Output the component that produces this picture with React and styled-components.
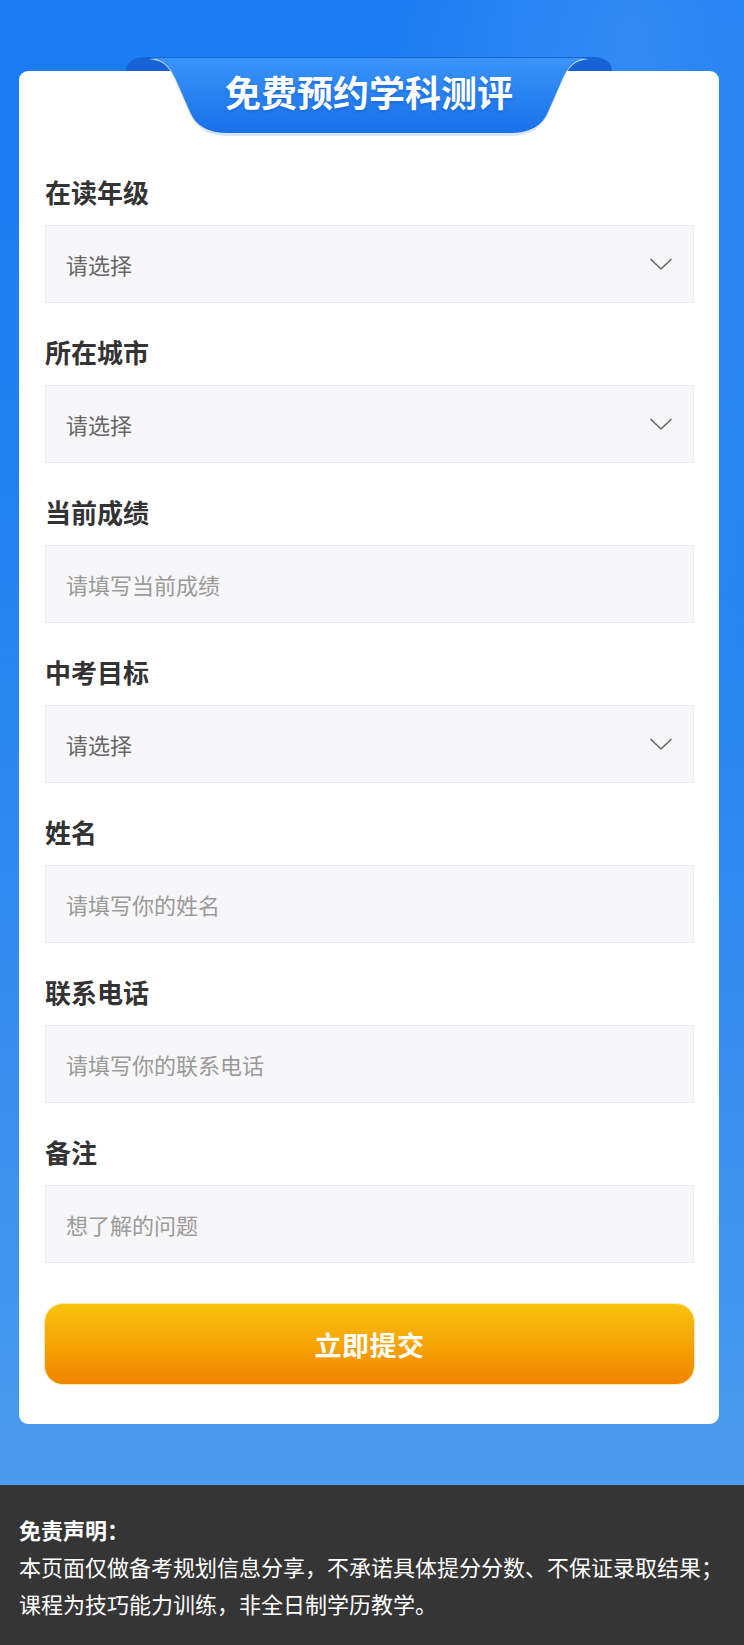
import React from 'react';
import styled, { createGlobalStyle } from 'styled-components';

const GlobalStyle = createGlobalStyle`
  * { box-sizing: border-box; }
  body {
    margin: 0;
    font-family: "Noto Sans CJK SC", "Noto Sans", sans-serif;
  }
`;

const fields = [
  { label: '在读年级', placeholder: '请选择', select: true },
  { label: '所在城市', placeholder: '请选择', select: true },
  { label: '当前成绩', placeholder: '请填写当前成绩' },
  { label: '中考目标', placeholder: '请选择', select: true },
  { label: '姓名', placeholder: '请填写你的姓名' },
  { label: '联系电话', placeholder: '请填写你的联系电话' },
  { label: '备注', placeholder: '想了解的问题' },
];

const Page = styled.div`
  width: 744px;
  min-height: 1645px;
  display: flex;
  flex-direction: column;
  background:
    radial-gradient(ellipse at 85% 3%, rgba(120, 180, 255, 0.25) 0%, transparent 30%),
    linear-gradient(180deg, #1b7bf1 0%, #2482f0 35%, #3f93ee 75%, #56a0ec 100%);
`;

const Main = styled.div`
  padding: 71px 25px 60px 19px;
`;

const Card = styled.div`
  position: relative;
  background: #fff;
  border-radius: 9px;
  padding: 103px 25px 40px 26px;
`;

const Tab = styled.div`
  position: absolute;
  left: 107px;
  top: -15px;
  width: 486px;
  height: 82px;
`;

const TabTitle = styled.div`
  position: absolute;
  left: 0;
  right: 0;
  top: 13px;
  text-align: center;
  color: #fff;
  font-size: 36px;
  font-weight: 700;
  line-height: 44px;
  text-shadow: 0 2px 3px rgba(10, 70, 170, 0.35);
`;

const Form = styled.div`
  display: flex;
  flex-direction: column;
  gap: 31px;
`;

const Field = styled.div`
  display: flex;
  flex-direction: column;
  gap: 15px;
`;

const Label = styled.div`
  font-size: 26px;
  font-weight: 700;
  color: #333;
  line-height: 36px;
`;

const Box = styled.div`
  height: 78px;
  background: #f7f6f8;
  border: 1px solid #ebeaec;
  display: flex;
  align-items: center;
  justify-content: space-between;
  padding: 0 20px;
  font-size: 22px;
  color: ${({ $select }) => ($select ? '#666' : '#9a9a9a')};
`;

const Chevron = styled.svg`
  width: 24px;
  height: 14px;
  display: block;
`;

const Submit = styled.div`
  margin-top: 41px;
  height: 80px;
  border-radius: 18px;
  background: linear-gradient(180deg, #f8c20e 0%, #f6a406 50%, #f08400 100%);
  box-shadow: 0 0 0 1px #fde9a8;
  display: flex;
  align-items: center;
  justify-content: center;
  color: #fff;
  font-size: 27px;
  font-weight: 700;
  letter-spacing: 0.5px;
`;

const Footer = styled.div`
  margin-top: auto;
  background: #353535;
  color: #fff;
  padding: 26px 19px 23px;
  font-size: 22px;
  line-height: 37px;
  height: 160px;
`;

const FooterTitle = styled.div`
  font-weight: 700;
`;

const TabShape = () => (
  <svg width="486" height="82" viewBox="0 0 486 82" style={{ position: 'absolute', left: 0, top: 0 }}>
    <defs>
      <linearGradient id="front" x1="0" y1="0" x2="0" y2="1">
        <stop offset="0" stopColor="#3a94f8" />
        <stop offset="1" stopColor="#1970ea" />
      </linearGradient>
    </defs>
    <path d="M0,15 C0,6 8,1 20,1 L466,1 C478,1 486,6 486,15 Z" fill="#1763d6" />
    <path
      d="M20,3 C38,3 44,12 50,26 L64,58 C70,72 82,80 102,80 L384,80 C404,80 416,72 422,58 L436,26 C442,12 448,3 466,3 Z"
      fill="#d6e5f8"
    />
    <path
      d="M20,2 C38,2 44,11 50,24 L64,56 C70,70 82,77 102,77 L384,77 C404,77 416,70 422,56 L436,24 C442,11 448,2 466,2 Z"
      fill="url(#front)"
    />
  </svg>
);

const App = () => {
  return (
    <Page>
      <GlobalStyle />
      <Main>
        <Card>
          <Tab>
            <TabShape />
            <TabTitle>免费预约学科测评</TabTitle>
          </Tab>
          <Form>
            {fields.map((item) => (
              <Field key={item.label}>
                <Label>{item.label}</Label>
                <Box $select={item.select}>
                  <span>{item.placeholder}</span>
                  {item.select && (
                    <Chevron viewBox="0 0 24 14">
                      <path d="M1.5,2 L12,12 L22.5,2" fill="none" stroke="#666" strokeWidth="1.6" />
                    </Chevron>
                  )}
                </Box>
              </Field>
            ))}
          </Form>
          <Submit>立即提交</Submit>
        </Card>
      </Main>
      <Footer>
        <FooterTitle>免责声明：</FooterTitle>
        <div>本页面仅做备考规划信息分享，不承诺具体提分分数、不保证录取结果；</div>
        <div>课程为技巧能力训练，非全日制学历教学。</div>
      </Footer>
    </Page>
  );
};

export default App;
